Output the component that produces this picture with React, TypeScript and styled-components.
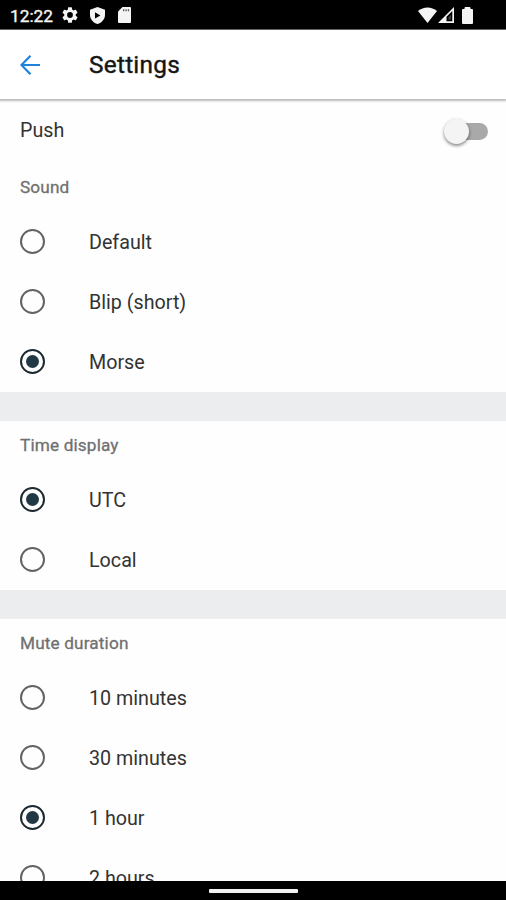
import React, { useState } from "react";
import styled, { createGlobalStyle } from "styled-components";

const GlobalStyle = createGlobalStyle`
  * { box-sizing: border-box; }
  body { margin: 0; background: #fff; font-family: Roboto, "Liberation Sans", sans-serif; }
`;

const Screen = styled.div`
  width: 506px;
  height: 900px;
  display: flex;
  flex-direction: column;
  overflow: hidden;
  background: #fefefe;
`;

const StatusBar = styled.header`
  flex: none;
  height: 30px;
  padding: 1px 33px 0 10px;
  display: flex;
  align-items: center;
  justify-content: space-between;
  background: #000;
  border-bottom: 1px solid #6c6c6c;
  color: #f4f4f4;
`;

const StatusGroup = styled.div`
  display: flex;
  align-items: center;
  svg { display: block; fill: currentColor; }
`;

const Clock = styled.span`
  width: 52px;
  padding-top: 1px;
  font-size: 17.3px;
  -webkit-text-stroke: 0.35px currentColor;
  line-height: 20px;
  white-space: nowrap;
`;

const StatusIcon = styled.svg<{ $after?: number }>`
  flex: none;
  margin-right: ${(p) => p.$after ?? 0}px;
`;

const AppBar = styled.div`
  flex: none;
  height: 69px;
  padding-left: 20px;
  display: flex;
  align-items: center;
  background: #fff;
  box-shadow: 0 1px 2px 1px rgba(0, 0, 0, 0.27);
  z-index: 1;
`;

const BackButton = styled.button`
  width: 69px;
  padding: 0;
  border: 0;
  background: none;
  svg { display: block; }
`;

const Title = styled.h1`
  margin: 0;
  font-size: 24.4px;
  font-weight: 400;
  line-height: 30px;
  letter-spacing: 0.25px;
  -webkit-text-stroke: 0.4px currentColor;
  color: #161616;
`;

const Content = styled.main`
  flex: 1;
  min-height: 0;
  overflow: hidden;
`;

const PushRow = styled.div`
  height: 64px;
  padding: 0 18px 1px 20px;
  display: flex;
  align-items: center;
  justify-content: space-between;
`;

const Label = styled.span`
  font-size: 19.7px;
  line-height: 24px;
  color: #333;
`;

const Track = styled.button<{ $on: boolean }>`
  width: 41px;
  height: 17px;
  margin: 1px 0 0;
  padding: 0;
  display: flex;
  align-items: center;
  justify-content: ${(p) => (p.$on ? "flex-end" : "flex-start")};
  border: 0;
  border-radius: 9px;
  background: #a9a9a9;
`;

const Thumb = styled.span`
  width: 25px;
  height: 25px;
  flex: none;
  margin: 0 -3px;
  border-radius: 50%;
  background: #f4f4f4;
  box-shadow: 0 2px 3px rgba(0, 0, 0, 0.35), 0 1px 4px rgba(0, 0, 0, 0.16);
`;

const Section = styled.section`
  & + & { border-top: 29px solid #ecedef; }
`;

const SectionTitle = styled.h2`
  margin: 0;
  height: 49px;
  padding: 0 0 1px 20px;
  display: flex;
  align-items: center;
  font-size: 17.2px;
  font-weight: 400;
  letter-spacing: 0.15px;
  -webkit-text-stroke: 0.3px currentColor;
  color: #707070;
`;

const OptionRow = styled.div`
  height: 60px;
  padding-left: 20px;
  display: flex;
  align-items: center;
  cursor: pointer;
  ${Label} { padding-top: 1px; }
`;

const Radio = styled.span<{ $on: boolean }>`
  width: 25px;
  height: 25px;
  margin: 0 44px 0 0;
  flex: none;
  display: flex;
  align-items: center;
  justify-content: center;
  border: 2px solid ${(p) => (p.$on ? "#1d2930" : "#636363")};
  border-radius: 50%;
  position: relative;
  top: -0.5px;
  &::after {
    content: "";
    width: 13px;
    height: 13px;
    border-radius: 50%;
    background: ${(p) => (p.$on ? "#213845" : "transparent")};
  }
`;

const NavBar = styled.footer`
  flex: none;
  height: 19px;
  padding-top: 1px;
  display: flex;
  align-items: center;
  justify-content: center;
  background: #000;
`;

const HomeHandle = styled.span`
  width: 89px;
  height: 4px;
  border-radius: 1px;
  background: #f2f2f2;
`;

const groups = [
  { title: "Sound", options: ["Default", "Blip (short)", "Morse"], initial: 2 },
  { title: "Time display", options: ["UTC", "Local"], initial: 0 },
  { title: "Mute duration", options: ["10 minutes", "30 minutes", "1 hour", "2 hours"], initial: 2 },
];

function OptionGroup({ title, options, initial }: { title: string; options: string[]; initial: number }) {
  const [selected, setSelected] = useState(initial);
  return (
    <Section>
      <SectionTitle>{title}</SectionTitle>
      {options.map((option, i) => (
        <OptionRow key={option} role="radio" aria-checked={i === selected} onClick={() => setSelected(i)}>
          <Radio $on={i === selected} />
          <Label>{option}</Label>
        </OptionRow>
      ))}
    </Section>
  );
}

export default function App() {
  const [push, setPush] = useState(false);
  return (
    <Screen>
      <GlobalStyle />
      <StatusBar>
        <StatusGroup>
          <Clock>12:22</Clock>
          <StatusIcon $after={12} width="16" height="16" viewBox="2 2 20 20">
            <path d="M19.14 12.94c.04-.3.06-.61.06-.94 0-.32-.02-.64-.07-.94l2.03-1.58a.49.49 0 0 0 .12-.61l-1.92-3.32a.49.49 0 0 0-.59-.22l-2.39.96c-.5-.38-1.03-.7-1.62-.94l-.36-2.54a.48.48 0 0 0-.48-.41h-3.84c-.24 0-.43.17-.47.41l-.36 2.54c-.59.24-1.13.57-1.62.94l-2.39-.96a.48.48 0 0 0-.59.22L2.74 8.87a.47.47 0 0 0 .12.61l2.03 1.58c-.05.3-.09.63-.09.94s.02.64.07.94l-2.03 1.58a.49.49 0 0 0-.12.61l1.92 3.32c.12.22.37.29.59.22l2.39-.96c.5.38 1.03.7 1.62.94l.36 2.54c.05.24.24.41.48.41h3.84c.24 0 .44-.17.47-.41l.36-2.54c.59-.24 1.13-.56 1.62-.94l2.39.96c.22.08.47 0 .59-.22l1.92-3.32a.47.47 0 0 0-.12-.61zM12 15.6a3.6 3.6 0 1 1 0-7.2 3.6 3.6 0 0 1 0 7.2z" />
          </StatusIcon>
          <StatusIcon $after={13} width="15" height="17" viewBox="0 0 15 17">
            <path fillRule="evenodd" d="M7.5 0 15 2.7v5.2c0 4.2-3.1 7.7-7.5 9.1C3.1 15.6 0 12.1 0 7.9V2.7zM5 5.2v6.4l5.4-3.200z" />
          </StatusIcon>
          <StatusIcon width="13" height="16" viewBox="0 0 13 16">
            <path d="M4.5 0H12a1 1 0 0 1 1 1v14a1 1 0 0 1-1 1H1a1 1 0 0 1-1-1V4.500z" />
            <path d="M5 2.200h1.300v2H5zM7.400 2.200h1.300v2H7.400zM9.800 2.200h1.300v2H9.800z" fill="#555" />
          </StatusIcon>
        </StatusGroup>
        <StatusGroup>
          <StatusIcon $after={1} width="19" height="16" viewBox="0 0 19 16">
            <path d="M0 4C5.5-.7 13.5-.7 19 4L9.5 16z" />
          </StatusIcon>
          <StatusIcon $after={8} width="16" height="16" viewBox="0 0 16 16">
            <path fillRule="evenodd" d="M16 0v16H0zM14.300 4 8.500 9.800v4.500h5.800z" />
            <path d="M10.500 10.200 13 7.700v5h-2.500z" opacity=".25" />
          </StatusIcon>
          <StatusIcon width="11" height="17" viewBox="0 0 11 17">
            <path d="M2.500 2V1a1 1 0 0 1 1-1h4a1 1 0 0 1 1 1v1H10a1 1 0 0 1 1 1v13a1 1 0 0 1-1 1H1a1 1 0 0 1-1-1V3a1 1 0 0 1 1-1z" />
          </StatusIcon>
        </StatusGroup>
      </StatusBar>
      <AppBar>
        <BackButton aria-label="Back">
          <svg width="20" height="20" viewBox="0 0 20 20" fill="none" stroke="#1f82dc" strokeWidth="2.2">
            <path d="M20 10H2M10.500 .8 1.500 10l9 9.200" />
          </svg>
        </BackButton>
        <Title>Settings</Title>
      </AppBar>
      <Content>
        <PushRow>
          <Label>Push</Label>
          <Track $on={push} role="switch" aria-checked={push} onClick={() => setPush(!push)}>
            <Thumb />
          </Track>
        </PushRow>
        {groups.map((group) => (
          <OptionGroup key={group.title} {...group} />
        ))}
      </Content>
      <NavBar>
        <HomeHandle />
      </NavBar>
    </Screen>
  );
}
